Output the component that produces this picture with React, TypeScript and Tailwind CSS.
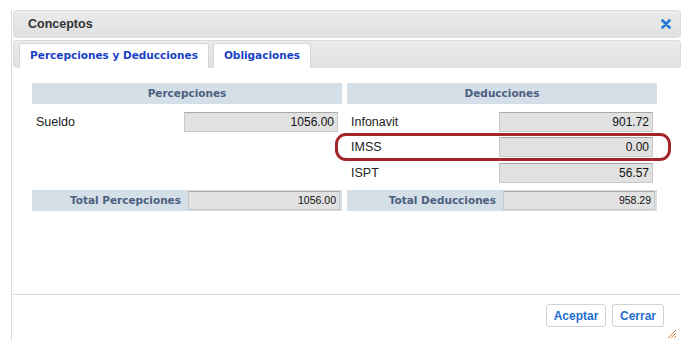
import React from 'react';

const sans = { fontFamily: '"Liberation Sans", Arial, sans-serif' };
const wide = { fontFamily: '"DejaVu Sans", Verdana, sans-serif' };

const Field = ({ value, small }: { value: string; small?: boolean }) => (
  <div
    className={`flex items-center justify-end bg-[#e1e1e1] border border-[#c8c8c8] border-t-[#a8a8a8] pr-[3px] text-[#111] ${
      small ? 'h-[19px] w-[152px] text-[10.5px]' : 'h-[20px] w-[154px] text-[12px]'
    }`}
  >
    {value}
  </div>
);

const Row = ({ label, value }: { label?: string; value?: string }) => (
  <div className="flex h-[20px] items-center pl-[4px] pr-[4px] text-[12.5px] text-[#222]">
    <span>{label}</span>
    <div className="ml-auto">{value !== undefined && <Field value={value} />}</div>
  </div>
);

const Header = ({ children }: { children: React.ReactNode }) => (
  <div
    className="flex h-[21px] items-center justify-center bg-[#d5dfe8] text-[10.5px] font-bold text-[#4c6080]"
    style={wide}
  >
    {children}
  </div>
);

const Total = ({ label, value }: { label: string; value: string }) => (
  <div className="flex h-[21px] items-center bg-[#d5dfe8] pr-[2px]">
    <span className="flex-1 pr-[7px] text-right text-[10.5px] font-bold text-[#4c6080]" style={wide}>
      {label}
    </span>
    <Field value={value} small />
  </div>
);

export default function App() {
  return (
    <div className="h-[351px] w-[692px] bg-white pl-[11px] pt-[10px]" style={sans}>
      <div className="flex h-[331px] w-[670px] flex-col border-l border-[#d9d9d9]">
        {/* Title bar */}
        <div className="ml-[1px] flex h-[28px] items-center rounded-[4px] border border-[#dcdcdc] bg-gradient-to-b from-[#ebebeb] to-[#e0e0e0] pl-[14px] pr-[9px]">
          <span className="text-[12.5px] font-bold text-[#333]">Conceptos</span>
          <svg className="ml-auto" width="10" height="10" viewBox="0 0 10 10">
            <path d="M1.5 1.5 L8.5 8.5 M8.5 1.5 L1.5 8.5" stroke="#1f78d6" strokeWidth="2.6" strokeLinecap="round" />
          </svg>
        </div>

        {/* Tabs */}
        <div className="mt-[2px] ml-[1px] flex h-[28px] items-end gap-[4px] rounded-[4px] border border-b-0 border-[#dcdcdc] bg-gradient-to-b from-[#ebebeb] to-[#e0e0e0] pl-[5px]">
          <div
            className="flex h-[25px] w-[190px] items-center justify-center rounded-t-[3px] border border-b-0 border-[#d6d6d6] bg-white text-[10.5px] font-bold text-[#1a3fc4]"
            style={wide}
          >
            Percepciones y Deducciones
          </div>
          <div
            className="flex h-[25px] w-[98px] items-center justify-center rounded-t-[3px] border border-b-0 border-[#d6d6d6] bg-white text-[10.5px] font-bold text-[#1a3fc4]"
            style={wide}
          >
            Obligaciones
          </div>
        </div>

        {/* Content */}
        <div className="relative flex-1 pl-[20px] pt-[15px]">
          <div className="grid w-[625px] grid-cols-[310px_310px] gap-x-[5px]">
            <Header>Percepciones</Header>
            <Header>Deducciones</Header>
            <div className="mt-[8px] flex flex-col gap-[5px]">
              <Row label="Sueldo" value="1056.00" />
              <Row />
              <div className="h-[21px]" />
            </div>
            <div className="mt-[8px] flex flex-col gap-[5px]">
              <Row label="Infonavit" value="901.72" />
              <Row label="IMSS" value="0.00" />
              <div className="h-[21px] pt-[1px]">
                <Row label="ISPT" value="56.57" />
              </div>
            </div>
            <div className="mt-[7px]">
              <Total label="Total Percepciones" value="1056.00" />
            </div>
            <div className="mt-[7px]">
              <Total label="Total Deducciones" value="958.29" />
            </div>
          </div>

          {/* annotation */}
          <div className="absolute left-[323px] top-[65px] h-[28px] w-[336px] rounded-[11px] border-[3px] border-[#a3252a]" />
        </div>

        {/* Footer */}
        <div className="relative ml-[1px] flex h-[47px] items-start justify-end gap-[6px] border-t border-[#dcdcdc] pr-[17px] pt-[9px]">
          <button className="h-[23px] w-[60px] rounded-[3px] border border-[#d2d2d2] bg-white text-[12px] font-bold text-[#1f6fd0]">
            Aceptar
          </button>
          <button className="h-[23px] w-[52px] rounded-[3px] border border-[#d2d2d2] bg-white text-[12px] font-bold text-[#1f6fd0]">
            Cerrar
          </button>
          <svg className="absolute right-[4px] bottom-[2px]" width="10" height="10" viewBox="0 0 10 10">
            <path d="M1 9 L9 1 M4 9 L9 4 M7 9 L9 7" stroke="#d2691e" strokeWidth="0.8" />
          </svg>
        </div>
      </div>
    </div>
  );
}
